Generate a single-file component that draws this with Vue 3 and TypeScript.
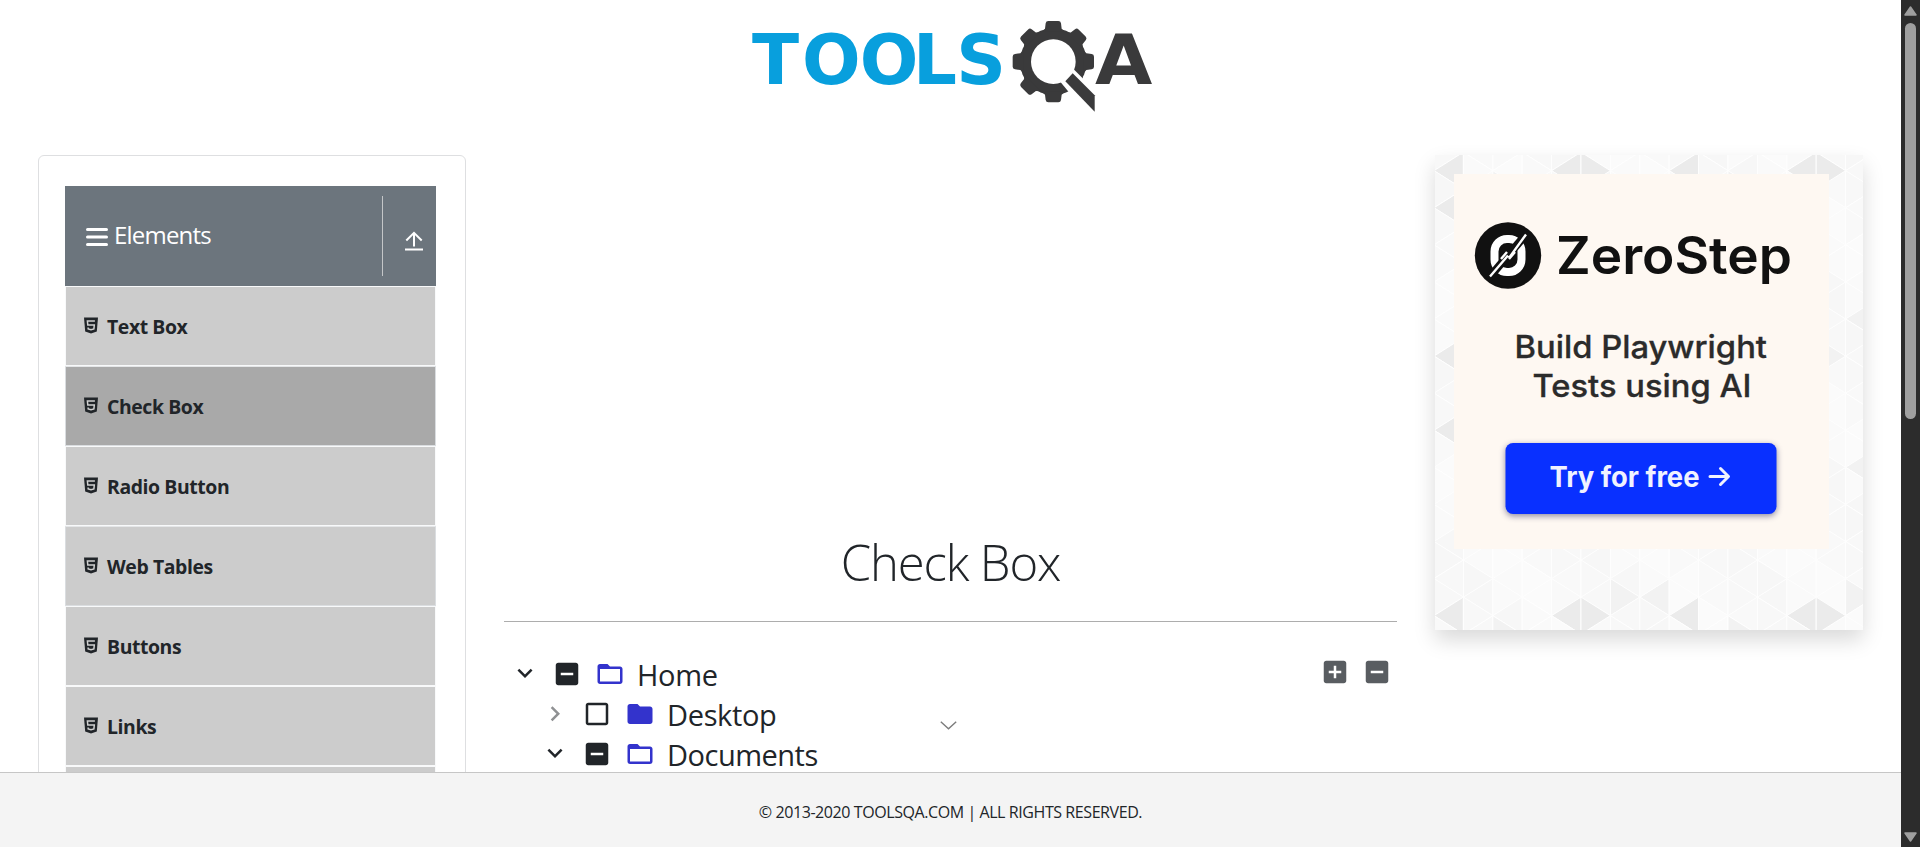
<script setup lang="ts">
interface MenuItem { label: string; cls: string }
interface TreeNode { label: string; level: number; open: boolean; partial: boolean }
interface Facet { points: string; fill: string }

const menu: MenuItem[] = [
  { label: 'Text Box', cls: '' },
  { label: 'Check Box', cls: 'active edged' },
  { label: 'Radio Button', cls: '' },
  { label: 'Web Tables', cls: 'edged' },
  { label: 'Buttons', cls: '' },
  { label: 'Links', cls: '' },
  { label: 'Broken Links - Images', cls: '' }
]

const nodes: TreeNode[] = [
  { label: 'Home', level: 0, open: true, partial: true },
  { label: 'Desktop', level: 1, open: false, partial: false },
  { label: 'Documents', level: 1, open: true, partial: true }
]

const teeth = [0, 45, 90, 135, 180, 225, 270, 315]

// Triangular mosaic behind the advert: columns of triangles with vertical sides.
const colW = 29.4
const side = 37.08
const dark = new Set(['0L0', '0L1', '4L0', '5R0', '8L0', '12L0', '13R0', '0L12', '4L12', '5R12', '8L12', '12L12', '13R12', '0L5', '0L7'])
const mid = new Set(['6R11', '7L11', '14R11', '14L8', '13R5', '14L4', '2R0', '10R0', '10R12', '2R12'])
const tints = ['#f7f7f7', '#f9f9f9', '#fafafa', '#f8f8f8', '#fbfbfb']
const facets: Facet[] = []
for (let c = 0; c < 15; c++) {
  const x0 = -1 + c * colW
  const x1 = x0 + colW
  for (let r = -1; r < 14; r++) {
    const y0 = 15.7 + r * side
    for (const dir of ['L', 'R']) {
      const even = c % 2 === 0
      // L: apex on the left edge, R: apex on the right edge
      const apexY = (dir === 'L') === even ? y0 : y0 + side / 2
      const key = `${c}${dir}${r}`
      const n = Math.abs((c * 7 + r * 13 + (dir === 'L' ? 5 : 0)) % 5)
      const fill = dark.has(key) ? '#ebebeb' : mid.has(key) ? '#f2f2f2' : tints[n]
      const ax = dir === 'L' ? x0 : x1
      const bx = dir === 'L' ? x1 : x0
      facets.push({ points: `${ax},${apexY} ${bx},${apexY - side / 2} ${bx},${apexY + side / 2}`, fill })
    }
  }
}
</script>

<template>
  <div class="page">
    <header class="top">
      <svg class="logo" viewBox="0 0 1290 330" width="430" height="110">
        <text class="word" y="221" x="36 186 359 519 649">TOOLS</text>
        <g fill="#3a3a3b">
          <circle cx="940" cy="155" r="100" />
          <path v-for="a in teeth" :key="a" :transform="`rotate(${a} 940 155)`" d="M905 65 915 56 917 40Q918 33 925 33H955Q962 33 963 40L965 56 975 65Z" />
        </g>
        <circle cx="940" cy="155" r="67" fill="#fff" />
        <path d="M962 217 1001 178 1082 259V340H1064Z" fill="#fff" />
        <path d="M976 214 998 190 1064 256V305Z" fill="#3a3a3b" />
        <text class="word a" y="221" x="1065" textLength="172" lengthAdjust="spacingAndGlyphs">A</text>
      </svg>
    </header>

    <main class="body">
      <aside class="side">
        <div class="group">
          <svg class="burger" viewBox="0 0 22 20" width="22" height="20"><path d="M1.5 2.5h19M1.5 10h19M1.5 17.4h19" stroke="#fff" stroke-width="3" stroke-linecap="round" /></svg>
          <span class="gname">Elements</span>
          <span class="up">
            <svg viewBox="0 0 18 20" width="18" height="20" fill="none" stroke="#fff" stroke-width="2"><path d="M9 15.500V2M1.300 9.500 9 1.800l7.700 7.700M0 18.500h18" /></svg>
          </span>
        </div>
        <ul class="menu">
          <li v-for="i in menu" :key="i.label" :class="i.cls">
            <svg viewBox="0 0 14 17" width="14" height="17"><path d="M0 .6H14L12.8 14.6 7 16.5 1.2 14.6Z" fill="#212529" /><path d="M10.9 4H3.4l.4 4h6.5l-.4 3.9L7 12.8l-2.800-.9-.1-1.400" fill="none" stroke="#d0d0d0" stroke-width="1.500" /></svg>
            <span>{{ i.label }}</span>
          </li>
        </ul>
      </aside>

      <section class="content">
        <h1>Check Box</h1>
        <div class="treewrap">
          <ol class="tree">
            <li v-for="n in nodes" :key="n.label" :class="['lv' + n.level, n.label.toLowerCase()]">
              <svg class="ico" :class="{ closed: !n.open }" viewBox="0 0 24 24">
                <path v-if="n.open" d="M7.41 7.84 12 12.42l4.59-4.58L18 9.25l-6 6-6-6z" />
                <path v-else d="M8.59 16.34l4.58-4.59-4.58-4.59L10 5.75l6 6-6 6z" />
              </svg>
              <svg class="ico box" viewBox="0 0 24 24">
                <path v-if="n.partial" d="M19 3H5c-1.1 0-2 .9-2 2v14c0 1.1.9 2 2 2h14c1.1 0 2-.9 2-2V5c0-1.1-.9-2-2-2zm-2 10H7v-2h10v2z" />
                <path v-else d="M19 5v14H5V5h14m0-2H5c-1.1 0-2 .9-2 2v14c0 1.1.9 2 2 2h14c1.1 0 2-.9 2-2V5c0-1.1-.9-2-2-2z" />
              </svg>
              <svg class="ico folder" viewBox="0 0 24 24">
                <path v-if="n.open" d="M20 6h-8l-2-2H4c-1.1 0-1.99.9-1.99 2L2 18c0 1.1.9 2 2 2h16c1.1 0 2-.9 2-2V8c0-1.1-.9-2-2-2zm0 12H4V8h16v10z" />
                <path v-else d="M10 4H4c-1.1 0-1.99.9-1.99 2L2 18c0 1.1.9 2 2 2h16c1.1 0 2-.9 2-2V8c0-1.1-.9-2-2-2h-8l-2-2z" />
              </svg>
              <span>{{ n.label }}</span>
            </li>
          </ol>
          <div class="opts">
            <svg class="ico" viewBox="0 0 24 24"><path d="M19 3H5c-1.1 0-2 .9-2 2v14c0 1.1.9 2 2 2h14c1.1 0 2-.9 2-2V5c0-1.1-.9-2-2-2zm-2 10h-4v4h-2v-4H7v-2h4V7h2v4h4v2z" /></svg>
            <svg class="ico" viewBox="0 0 24 24"><path d="M19 3H5c-1.1 0-2 .9-2 2v14c0 1.1.9 2 2 2h14c1.1 0 2-.9 2-2V5c0-1.1-.9-2-2-2zm-2 10H7v-2h10v2z" /></svg>
          </div>
        </div>
      </section>

      <aside class="ad">
        <svg viewBox="0 0 428 475" width="428" height="475">
          <polygon v-for="(f, k) in facets" :key="k" :points="f.points" :fill="f.fill" stroke="#fefefe" stroke-width="1" />
        </svg>
        <svg class="banner" viewBox="1454 174 375 375" width="375" height="375">
          <rect x="1454" y="174" width="375" height="375" fill="#fef8f2" />
          <circle cx="1508" cy="255.5" r="33.2" fill="#111" />
          <rect x="1494.500" y="239" width="27" height="33" rx="12.500" fill="none" stroke="#fff" stroke-width="8" />
          <path d="M1488 279 1528 232" stroke="#111" stroke-width="8" />
          <path d="M1490 276.500 1508 255.500M1501 259 1507 252M1509 258 1526 234.500M1509 259 1515 252" stroke="#fff" stroke-width="2.400" />
          <text class="zs" x="1556" y="274" textLength="236" lengthAdjust="spacingAndGlyphs">ZeroStep</text>
          <text class="tag" x="1514.500" y="358.300" textLength="252.500" lengthAdjust="spacingAndGlyphs">Build Playwright</text>
          <text class="tag" x="1532.500" y="397" textLength="219" lengthAdjust="spacingAndGlyphs">Tests using AI</text>
          <rect class="cta" x="1505.500" y="443" width="271" height="71" rx="7.500" />
          <text class="try" x="1549.500" y="487" textLength="150" lengthAdjust="spacingAndGlyphs">Try for free</text>
          <path d="M1710 476.500H1728M1720.500 468.500 1728.500 476.500 1720.500 484.500" fill="none" stroke="#f0f2ff" stroke-width="3" stroke-linecap="round" stroke-linejoin="round" />
        </svg>
      </aside>
    </main>

    <footer class="foot">© 2013-2020 TOOLSQA.COM | ALL RIGHTS RESERVED.</footer>

    <svg class="cursor" viewBox="0 0 17 9" width="17" height="9"><path d="M.8.8 8.500 7.800 16.200.8" fill="none" stroke="#7c7c7c" stroke-width="1.400" /></svg>

    <div class="scroll">
      <svg viewBox="0 0 13 10" width="13" height="10"><path d="M6.500 1 12 9H1Z" fill="#9f9f9f" stroke="#9f9f9f" stroke-width="1.500" stroke-linejoin="round" /></svg>
      <div class="thumb"></div>
      <svg viewBox="0 0 13 10" width="13" height="10"><path d="M6.500 9 12 1H1Z" fill="#9f9f9f" stroke="#9f9f9f" stroke-width="1.500" stroke-linejoin="round" /></svg>
    </div>
  </div>
</template>

<style>
html, body { margin: 0; overflow: hidden; }
</style>

<style scoped>
.page { position: relative; width: 1920px; height: 847px; overflow: hidden; background: #fff; color: #212529; font-family: "Open Sans", "Noto Sans", sans-serif; }
.page * { box-sizing: border-box; }
svg { display: block; flex: none; }
.top { height: 155px; padding: 10px 0 0 740px; }
.word { font: 700 207px "DejaVu Sans", sans-serif; fill: #089fdd; }
.word.a { fill: #3a3a3b; }
.body { display: flex; gap: 38px; padding-left: 38px; height: 617px; align-items: flex-start; width: 1901px; }
.side { width: 428px; height: 900px; border: 1px solid #dedfe1; border-radius: 6px; padding: 30px 29px 0 26px; flex: none; }
.group { height: 100px; display: flex; align-items: center; background: #6c757d; color: #fff; padding-left: 21px; }
.burger { margin-top: 1px; }
.gname { flex: 1; font-size: 24px; letter-spacing: -.8px; line-height: 30px; padding-left: 6px; margin-top: -2px; white-space: nowrap; }
.up { width: 54px; height: 80px; border-left: 1px solid #c4c6c8; padding: 35px 0 0 22px; }
.menu { list-style: none; margin: 0; padding: 0; }
.menu li { height: 80px; border: 1px solid #f8f9fa; background: #ccc; display: flex; align-items: center; padding-left: 18px; font-weight: 700; font-size: 19.400px; letter-spacing: -.4px; white-space: nowrap; }
.menu li.active { background: #a9a9a9; }
.menu li.edged { border-color: #dadde0; border-top-color: #e4e6e8; }
.menu svg { margin-right: 9px; margin-top: -2px; }
.content { width: 893px; flex: none; padding-top: 372px; }
h1 { margin: 0; height: 95px; border-bottom: 1px solid #adadad; font-weight: 300; font-size: 49px; letter-spacing: -1.150px; line-height: 70px; text-align: center; }
.treewrap { display: flex; justify-content: space-between; padding: 32px 5px 0 5.500px; }
.tree { list-style: none; margin: 0; padding: 0; font-size: 29px; }
.tree li { display: flex; align-items: center; height: 40px; white-space: nowrap; }
.tree .lv1 { padding-left: 30px; }
.home { letter-spacing: -.3px; }
.desktop { letter-spacing: -.350px; }
.documents { letter-spacing: -.500px; }
.ico { width: 30px; height: 30px; fill: #212529; }
.tree .closed { fill: #8f9193; }
.box { margin-left: 12.500px; }
.tree .folder { fill: #33c; margin: 0 12.500px 0 12.500px; }
.opts { display: flex; gap: 12px; padding-top: 3px; }
.opts .ico { fill: #595d61; }
.ad { position: relative; width: 428px; height: 475px; flex: none; box-shadow: 0 10px 20px rgba(0,0,0,.15); }
.banner { position: absolute; left: 19px; top: 19px; }
.zs { font: 600 52px Inter, sans-serif; fill: #111; }
.tag { font: 500 31.500px Inter, sans-serif; fill: #2b2b2b; stroke: #2b2b2b; stroke-width: .3px; }
.try { font: 700 28px Inter, sans-serif; fill: #f0f2ff; }
.cta { fill: #0930ff; filter: drop-shadow(0 2px 3px rgba(0,0,60,.45)); }
.foot { position: absolute; left: 0; bottom: 0; width: 1901px; height: 75px; border-top: 1px solid #c6c6c6; background: #f4f4f4; display: flex; align-items: center; justify-content: center; font-size: 16px; letter-spacing: -.420px; padding-top: 3px; }
.cursor { position: absolute; left: 940px; top: 720.500px; }
.scroll { position: absolute; right: 0; top: 0; width: 19px; height: 847px; background: #2c2c2c; display: flex; flex-direction: column; align-items: center; padding: 6px 0 5px; }
.thumb { width: 11px; height: 396px; border-radius: 6px; background: #9f9f9f; margin: 7px 0 auto; }
</style>
